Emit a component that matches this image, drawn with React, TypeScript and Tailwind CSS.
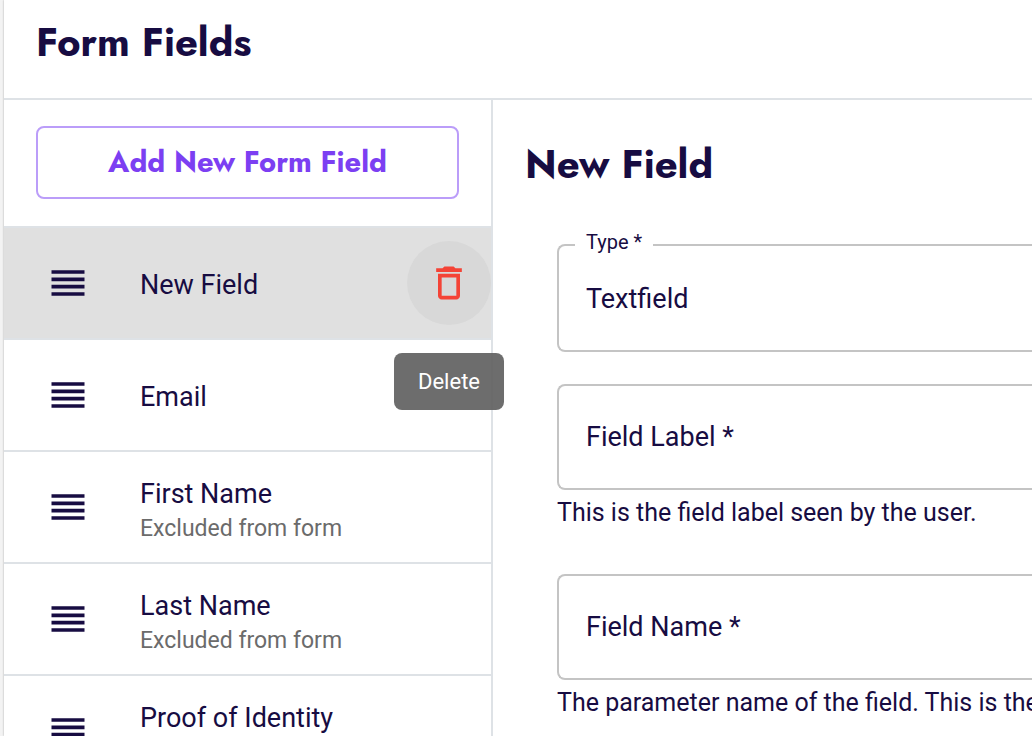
import { useState } from 'react';

interface FormField {
  id: string;
  label: string;
  excluded?: boolean;
}

const fields: FormField[] = [
  { id: 'new', label: 'New Field' },
  { id: 'email', label: 'Email' },
  { id: 'firstName', label: 'First Name', excluded: true },
  { id: 'lastName', label: 'Last Name', excluded: true },
  { id: 'identity', label: 'Proof of Identity', excluded: true },
];

const ReorderIcon = () => (
  <svg className="w-11 h-11 shrink-0" viewBox="0 0 24 24" fill="currentColor">
    <path d="M3 15h18v-2H3v2zm0 4h18v-2H3v2zm0-8h18V9H3v2zm0-6v2h18V5H3z" />
  </svg>
);

const DeleteIcon = () => (
  <svg className="w-11 h-11" viewBox="0 0 24 24" fill="currentColor">
    <path d="M6 19c0 1.1.9 2 2 2h8c1.1 0 2-.9 2-2V7H6v12zM8 9h8v10H8V9zm7.5-5l-1-1h-5l-1 1H5v2h14V4z" />
  </svg>
);

interface TextInputProps {
  id: string;
  label: string;
  helper: string;
}

const TextInput = ({ id, label, helper }: TextInputProps) => {
  const [value, setValue] = useState('');

  return (
    <div>
      <div className="relative">
        <input
          id={id}
          value={value}
          onChange={(e) => setValue(e.target.value)}
          className="block w-full h-[106px] px-7 rounded-l-lg border-2 border-r-0 border-[#c4c4c4] bg-white text-[27px] outline-none"
        />
        {!value && (
          <label
            htmlFor={id}
            className="absolute inset-y-0 left-[29px] flex items-center text-[27px] pointer-events-none"
          >
            {label}
          </label>
        )}
      </div>
      <p className="mt-1 text-[25px] leading-[38px] whitespace-nowrap">{helper}</p>
    </div>
  );
};

const FieldRow = ({ field, selected }: { field: FormField; selected: boolean }) => (
  <li
    className={`flex items-center h-28 pl-[42px] border-b-2 border-[#dee2e6] ${
      selected ? 'bg-[#e0e0e0]' : 'bg-white'
    }`}
  >
    <ReorderIcon />
    <div className="flex-1 ml-[50px] pt-1">
      <p className="text-[27px] leading-10">{field.label}</p>
      {field.excluded && (
        <p className="text-[23px] leading-[30px] text-[#6b6b6b]">Excluded from form</p>
      )}
    </div>
    {selected && (
      <div className="relative">
        <button
          type="button"
          aria-label="Delete"
          className="flex items-center justify-center w-[84px] h-[84px] rounded-full bg-[#d8d8d8] text-[#f44336]"
        >
          <DeleteIcon />
        </button>
        {/* Tooltip */}
        <span
          role="tooltip"
          className="absolute z-10 top-full left-1/2 -translate-x-1/2 mt-7 px-6 py-3 rounded-lg bg-[#616161]/92 text-[22px] leading-[33px] text-white"
        >
          Delete
        </span>
      </div>
    )}
  </li>
);

const App = () => {
  return (
    <div className="h-screen overflow-hidden pl-1 bg-[#f3f3f3] font-['Roboto',sans-serif] text-[#170c42]">
      <div className="flex flex-col h-full bg-white shadow-[0_0_2px_rgba(0,0,0,0.3)]">
        <header className="shrink-0 px-8 pt-3 pb-[26px] border-b-2 border-[#dee2e6]">
          <h1 className="font-['Jost','Lato',sans-serif] font-bold text-[40px] leading-[60px]">
            Form Fields
          </h1>
        </header>

        <div className="flex flex-1 min-h-0">
          {/* Field list */}
          <aside className="w-[489px] shrink-0 border-r-2 border-[#dee2e6]">
            <div className="px-8 pt-[26px] pb-[27px]">
              <button
                type="button"
                className="w-full h-[73px] rounded-lg border-2 border-[#bb9df9] font-['Jost','Lato',sans-serif] font-bold text-[29px] text-[#7c3ff2]"
              >
                Add New Form Field
              </button>
            </div>
            <ul className="border-t-2 border-[#dee2e6]">
              {fields.map((field) => (
                <FieldRow key={field.id} field={field} selected={field.id === 'new'} />
              ))}
            </ul>
          </aside>

          {/* Field editor */}
          <main className="flex-1 min-w-0 overflow-hidden pt-[34px]">
            <h2 className="pl-8 font-['Jost','Lato',sans-serif] font-bold text-[40px] leading-[60px]">
              New Field
            </h2>
            <form className="flex flex-col pt-[50px] pl-16">
              <div className="relative mb-8">
                <select
                  id="type"
                  defaultValue="textfield"
                  className="block w-full h-[108px] px-[27px] pt-[3px] rounded-l-lg border-2 border-r-0 border-[#c4c4c4] bg-white appearance-none text-[27px] outline-none"
                >
                  <option value="textfield">Textfield</option>
                  <option value="textarea">Textarea</option>
                </select>
                <label
                  htmlFor="type"
                  className="absolute -top-4 left-[18px] px-[11px] bg-white text-[20px] leading-7"
                >
                  Type *
                </label>
              </div>
              <div className="flex flex-col gap-[42px]">
                <TextInput
                  id="fieldLabel"
                  label="Field Label *"
                  helper="This is the field label seen by the user."
                />
                <TextInput
                  id="fieldName"
                  label="Field Name *"
                  helper="The parameter name of the field. This is the"
                />
              </div>
            </form>
          </main>
        </div>
      </div>
    </div>
  );
};

export default App;
